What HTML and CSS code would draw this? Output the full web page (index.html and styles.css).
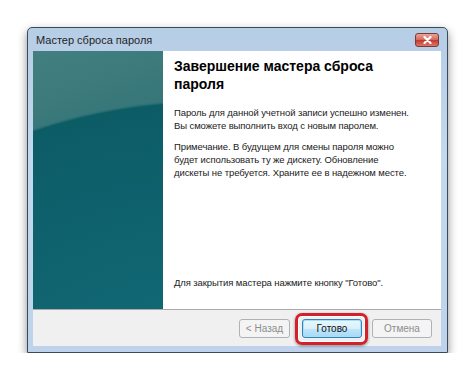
FILE: index.html
```html
<!DOCTYPE html>
<html lang="ru">
<head>
    <meta charset="UTF-8">
    <meta name="viewport" content="width=device-width, initial-scale=1.0">
    <title>Мастер сброса пароля</title>
    <link rel="stylesheet" href="styles.css">
</head>
<body>

    <div class="window">
        <div class="titlebar">
            <span class="title">Мастер сброса пароля</span>
            <span class="close">
                <svg width="9" height="8" viewBox="0 0 9 8">
                    <path d="M1.5 1 L7.5 7 M7.5 1 L1.5 7" stroke="#fff" stroke-width="2.2" stroke-linecap="round"/>
                </svg>
            </span>
        </div>

        <div class="client">
            <div class="page">
                <div class="side"></div>
                <div class="content">
                    <h1>Завершение мастера сброса<br>пароля</h1>
                    <p>Пароль для данной учетной записи успешно изменен.<br>Вы сможете выполнить вход с новым паролем.</p>
                    <p>Примечание. В будущем для смены пароля можно<br>будет использовать ту же дискету. Обновление<br>дискеты не требуется. Храните ее в надежном месте.</p>
                    <p class="last">Для закрытия мастера нажмите кнопку "Готово".</p>
                </div>
            </div>

            <div class="buttons">
                <button class="btn btn-back" disabled>&lt; Назад</button>
                <span class="ring">
                    <button class="btn btn-default">Готово</button>
                </span>
                <button class="btn" disabled>Отмена</button>
            </div>
        </div>
    </div>

</body>
</html>
```

FILE: styles.css
```css
body {
    margin: 0;
    padding: 27px 0 0 27px;
    background: #fff;
    font-family: "Liberation Sans", Arial, sans-serif;
}
.window {
    width: 421px;
    height: 326px;
    box-sizing: border-box;
    border: 1px solid #3b4a58;
    border-radius: 5px 5px 0 0;
    background: linear-gradient(#b6cde6, #c4d8ee 40%, #bed3eb);
    padding: 0 6px 6px 5px;
    box-shadow: 0 4px 10px rgba(0, 0, 0, 0.45);
    display: flex;
    flex-direction: column;
}
.titlebar {
    height: 23px;
    display: flex;
    align-items: center;
    justify-content: space-between;
    padding: 0 2px 0 3px;
}
.title {
    font-size: 11px;
    color: #1e1e1e;
}
.close {
    width: 24px;
    height: 14px;
    box-sizing: border-box;
    border: 1px solid #7b3a34;
    border-radius: 3px;
    background: linear-gradient(#e8a59b, #d5685a 48%, #c4382a 52%, #d9776a);
    display: flex;
    align-items: center;
    justify-content: center;
}
.client {
    flex: 1;
    display: flex;
    flex-direction: column;
    background: #f0f0f0;
}
.page {
    height: 258px;
    display: flex;
    background: #fff;
    border-bottom: 1px solid #a9a9a9;
}
.side {
    width: 130px;
    background:
        radial-gradient(ellipse 450px 352px at 180px 400px, #14707e 0%, #0c5c66 99%, #2f7374 99.6%, transparent 100%),
        linear-gradient(160deg, #437f80, #2c6f72 60%);
}
.content {
    flex: 1;
    display: flex;
    flex-direction: column;
    padding: 6px 10px 20px 11px;
    font-size: 9.5px;
    letter-spacing: -0.1px;
    line-height: 13px;
    color: #1a1a1a;
    white-space: nowrap;
}
h1 {
    margin: 0 0 13px;
    font-size: 14px;
    letter-spacing: 0;
    line-height: 18px;
    font-weight: bold;
    color: #000;
}
p {
    margin: 0 0 8px;
}
p.last {
    margin: auto 0 0;
}
.buttons {
    flex: 1;
    display: flex;
    justify-content: flex-end;
    align-items: flex-start;
    gap: 10px;
    padding: 9px 9px 0 0;
}
.btn {
    width: 60px;
    height: 19px;
    padding: 0;
    font-family: "Liberation Sans", Arial, sans-serif;
    font-size: 10px;
    border: 1px solid #adb2b5;
    border-radius: 3px;
    background: #f4f4f4;
    color: #8d8d8d;
}
.btn-back {
    width: 51px;
    margin-right: 2px;
}
.btn-default {
    color: #111;
    border-color: #3c7fb1;
    background: linear-gradient(#eaf6fd, #d9f0fc 50%, #bee6fd 51%, #a7d9f5);
    box-shadow: inset 0 0 0 1px #9fe2fb;
}
.ring {
    position: relative;
    display: flex;
}
.ring::after {
    content: "";
    position: absolute;
    top: -6px;
    left: -7px;
    right: -6px;
    bottom: -7px;
    border: 3px solid #d3202d;
    border-radius: 7px;
    box-shadow: inset 0 0 0 1px #fff, 0 1px 3px rgba(0, 0, 0, 0.45);
}
```
